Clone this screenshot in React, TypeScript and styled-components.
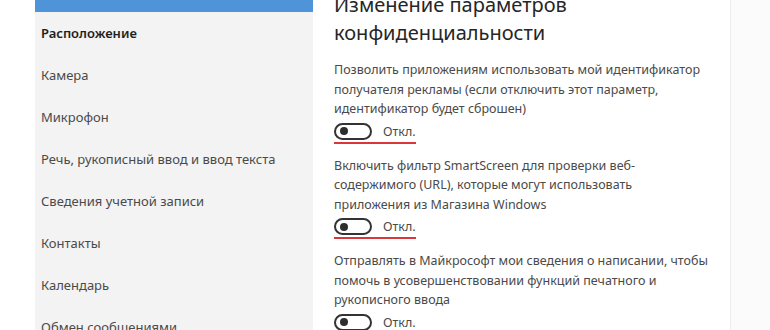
import React from 'react';
import styled, { createGlobalStyle } from 'styled-components';

const GlobalStyle = createGlobalStyle`
  html, body {
    margin: 0;
    padding: 0;
    background: #ffffff;
    overflow: hidden;
  }
  body {
    font-family: 'Noto Sans', 'Open Sans', sans-serif;
  }
`;

const Root = styled.div`
  display: grid;
  grid-template-columns: 35px 278px 417px 1fr;
  width: 770px;
  height: 330px;
  overflow: hidden;
`;

const Gutter = styled.div`
  background: #ffffff;
`;

const Sidebar = styled.nav`
  display: flex;
  flex-direction: column;
  background: #f3f3f3;
`;

// the highlighted entry above is scrolled out of view, only its lower edge shows
const SelectedBand = styled.div`
  flex: 0 0 12px;
  background: #4f94d8;
`;

const NavItem = styled.div<{ $current?: boolean }>`
  flex: 0 0 42px;
  display: flex;
  align-items: center;
  padding-left: 6px;
  font-size: 13px;
  color: ${(p) => (p.$current ? '#1f1f1f' : '#4a4a4a')};
  font-weight: ${(p) => (p.$current ? 600 : 400)};
  white-space: nowrap;
`;

const Content = styled.main`
  display: flex;
  flex-direction: column;
  padding-left: 21px;
  margin-top: -9px;
  background: #ffffff;
`;

const Heading = styled.h1`
  margin: 0 0 13px;
  font-size: 20px;
  line-height: 28px;
  font-weight: 400;
  color: #262626;
`;

const Option = styled.section`
  display: flex;
  flex-direction: column;
  margin-bottom: 12px;
`;

const Description = styled.p`
  margin: 0 0 4px;
  font-size: 12.5px;
  line-height: 19.5px;
  color: #4a4a4a;
  width: 376px;
`;

const ToggleRow = styled.div<{ $marked?: boolean }>`
  display: flex;
  align-items: center;
  gap: 11px;
  height: 17px;
  padding-bottom: 2px;
  width: 82px;
  border-bottom: 2px solid ${(p) => (p.$marked ? '#d9383a' : 'transparent')};
`;

const Switch = styled.span`
  position: relative;
  box-sizing: border-box;
  width: 38px;
  height: 17px;
  border: 2px solid #333333;
  border-radius: 9px;
  background: #ffffff;

  &::after {
    content: '';
    position: absolute;
    left: 4px;
    top: 2.5px;
    width: 8px;
    height: 8px;
    border-radius: 50%;
    background: #2e2e2e;
  }
`;

const SwitchLabel = styled.span`
  font-size: 12.5px;
  color: #4a4a4a;
`;

const Edge = styled.div`
  background: #fbfbfb;
  border-left: 1px solid #ececec;
`;

const navItems = [
  'Расположение',
  'Камера',
  'Микрофон',
  'Речь, рукописный ввод и ввод текста',
  'Сведения учетной записи',
  'Контакты',
  'Календарь',
  'Обмен сообщениями',
];

const options = [
  {
    text: 'Позволить приложениям использовать мой идентификатор получателя рекламы (если отключить этот параметр, идентификатор будет сброшен)',
    marked: true,
  },
  {
    text: 'Включить фильтр SmartScreen для проверки веб-содержимого (URL), которые могут использовать приложения из Магазина Windows',
    marked: true,
  },
  {
    text: 'Отправлять в Майкрософт мои сведения о написании, чтобы помочь в усовершенствовании функций печатного и рукописного ввода',
    marked: false,
  },
];

const App = () => (
  <>
    <GlobalStyle />
    <Root>
      <Gutter />
      <Sidebar>
        <SelectedBand />
        {navItems.map((item, i) => (
          <NavItem key={item} $current={i === 0}>
            {item}
          </NavItem>
        ))}
      </Sidebar>
      <Content>
        <Heading>
          Изменение параметров
          <br />
          конфиденциальности
        </Heading>
        {options.map((o) => (
          <Option key={o.text}>
            <Description>{o.text}</Description>
            <ToggleRow $marked={o.marked}>
              <Switch />
              <SwitchLabel>Откл.</SwitchLabel>
            </ToggleRow>
          </Option>
        ))}
      </Content>
      <Edge />
    </Root>
  </>
);

export default App;
